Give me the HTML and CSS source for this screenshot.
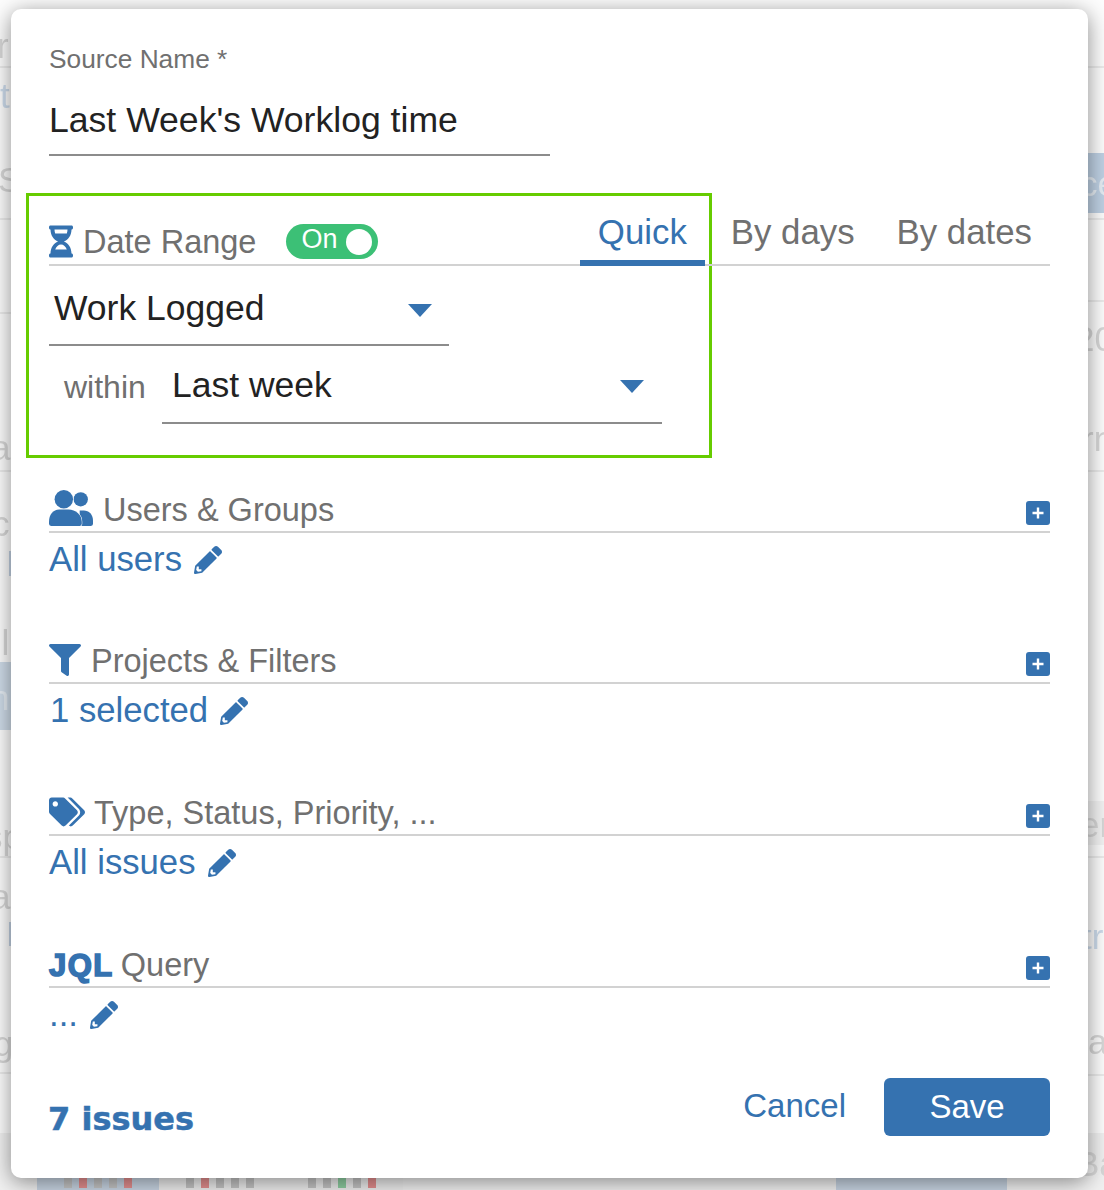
FILE: index.html
```html
<!DOCTYPE html>
<html lang="en">
<head>
  <meta charset="UTF-8">
  <title>Source settings</title>
  <link rel="stylesheet" href="styles.css">
</head>
<body>
  <!-- page behind the dialog, only the edges show -->
  <div class="backdrop">
    <span class="line l1"></span><span class="line l2"></span><span class="line l3"></span>
    <span class="line l4"></span><span class="line l5"></span><span class="line l6"></span>
    <span class="line r1"></span><span class="line r2"></span><span class="line r3"></span>
    <span class="line r4"></span><span class="line r5"></span><span class="line r6"></span>

    <span class="block block-left"></span>
    <span class="block block-right"></span>
    <span class="block band-right"></span>
    <span class="block band-bottom"></span>
    <span class="block bar-a"></span>
    <span class="block bar-b"></span>

    <span class="frag f1">ri</span>
    <span class="frag f2 bluish">t</span>
    <span class="frag f3">S</span>
    <span class="frag f4">a</span>
    <span class="frag f5">c</span>
    <span class="frag f6">ul</span>
    <span class="frag f7 whiteish">n</span>
    <span class="frag f8">sp</span>
    <span class="frag f9">a</span>
    <span class="frag f10">rg</span>
    <span class="frag f11 whiteish">ce</span>
    <span class="frag f12">20</span>
    <span class="frag f13">rn</span>
    <span class="frag f14">er</span>
    <span class="frag f15 bluish">tr</span>
    <span class="frag f16">a</span>
    <span class="frag f17">Ba</span>

    <div class="chart-strip">
      <div class="chart-tile active">
        <i class="bar gray"></i><i class="bar red"></i><i class="bar gray"></i><i class="bar gray"></i><i class="bar red"></i>
      </div>
      <div class="chart-tile">
        <i class="bar gray"></i><i class="bar red"></i><i class="bar gray"></i><i class="bar gray"></i><i class="bar gray"></i>
      </div>
      <div class="chart-tile">
        <i class="bar gray"></i><i class="bar gray"></i><i class="bar green"></i><i class="bar gray"></i><i class="bar red"></i>
      </div>
    </div>
    <span class="block pill-bottom"></span>
  </div>

  <div class="dialog">
    <div class="highlight"></div>

    <label class="field-label">Source Name *</label>
    <div class="name-input">Last Week's Worklog time</div>

    <div class="date-head">
      <svg class="icon icon-hourglass" viewBox="0 0 384 512"><path d="M360 0H24C10.745 0 0 10.745 0 24v16c0 13.255 10.745 24 24 24 0 90.965 51.016 167.734 120.842 192C75.016 280.266 24 357.035 24 448c-13.255 0-24 10.745-24 24v16c0 13.255 10.745 24 24 24h336c13.255 0 24-10.745 24-24v-16c0-13.255-10.745-24-24-24 0-90.965-51.016-167.734-120.842-192C308.984 231.734 360 154.965 360 64c13.255 0 24-10.745 24-24V24c0-13.255-10.745-24-24-24zm-75.078 384H99.08c17.059-46.797 52.096-80 92.92-80 40.821 0 75.862 33.196 92.922 80zm.019-256H99.078C91.988 108.548 88 86.748 88 64h208c0 22.805-3.987 44.587-11.059 64z"/></svg>
      <span class="head-title">Date Range</span>
      <div class="toggle"><span>On</span><i class="knob"></i></div>
      <div class="tabs">
        <a class="tab active">Quick</a>
        <a class="tab tab-days">By days</a>
        <a class="tab">By dates</a>
      </div>
    </div>

    <div class="select select-type">
      <span>Work Logged</span>
      <i class="caret"></i>
    </div>

    <div class="within-row">
      <span class="within">within</span>
      <div class="select select-range">
        <span>Last week</span>
        <i class="caret"></i>
      </div>
    </div>

    <div class="section first">
      <div class="section-head">
        <svg class="icon icon-users" viewBox="0 0 43 35">
          <circle cx="31" cy="9" r="7"/>
          <path d="M30 20h4c5 0 9 4 9 10v3a2 2 0 0 1-2 2H30z"/>
          <circle class="cut" cx="14.5" cy="9" r="9"/>
          <path class="cut" d="M10 19h9c7 0 13 5 13 12v2a2 2 0 0 1-2 2H2a2 2 0 0 1-2-2v-2c0-7 4-12 10-12z"/>
        </svg>
        <span class="head-title">Users &amp; Groups</span>
        <svg class="plus" viewBox="0 0 24 24"><rect width="24" height="24" rx="3"/><path d="M12 6.5v11M6.5 12h11"/></svg>
      </div>
      <a class="edit-link">All users
        <svg class="pencil" viewBox="0 0 512 512"><path d="M497.9 142.1l-46.1 46.1c-4.7 4.7-12.3 4.7-17 0l-111-111c-4.7-4.7-4.7-12.3 0-17l46.1-46.1c18.7-18.7 49.1-18.7 67.9 0l60.1 60.1c18.8 18.7 18.8 49.1 0 67.9zM284.2 99.8L21.6 362.4.4 483.9c-2.9 16.4 11.4 30.6 27.8 27.8l121.5-21.3 262.6-262.6c4.7-4.7 4.7-12.3 0-17l-111-111c-4.8-4.7-12.4-4.7-17.1 0zM88 424h48v36.3l-64.5 11.3-31.1-31.1L51.7 376H88v48z"/></svg>
      </a>
    </div>

    <div class="section">
      <div class="section-head">
        <svg class="icon icon-filter" viewBox="0 0 512 512"><path d="M487.976 0H24.028C2.71 0-8.047 25.866 7.058 40.971L192 225.941V432c0 7.831 3.821 15.17 10.237 19.662l80 55.98C298.02 518.69 320 507.493 320 487.98V225.941l184.947-184.97C520.021 25.896 509.338 0 487.976 0z"/></svg>
        <span class="head-title">Projects &amp; Filters</span>
        <svg class="plus" viewBox="0 0 24 24"><rect width="24" height="24" rx="3"/><path d="M12 6.5v11M6.5 12h11"/></svg>
      </div>
      <a class="edit-link one">1 selected
        <svg class="pencil" viewBox="0 0 512 512"><path d="M497.9 142.1l-46.1 46.1c-4.7 4.7-12.3 4.7-17 0l-111-111c-4.7-4.7-4.7-12.3 0-17l46.1-46.1c18.7-18.7 49.1-18.7 67.9 0l60.1 60.1c18.8 18.7 18.8 49.1 0 67.9zM284.2 99.8L21.6 362.4.4 483.9c-2.9 16.4 11.4 30.6 27.8 27.8l121.5-21.3 262.6-262.6c4.7-4.7 4.7-12.3 0-17l-111-111c-4.8-4.7-12.4-4.7-17.1 0zM88 424h48v36.3l-64.5 11.3-31.1-31.1L51.7 376H88v48z"/></svg>
      </a>
    </div>

    <div class="section">
      <div class="section-head">
        <svg class="icon icon-tags" viewBox="0 0 640 512"><path d="M497.941 225.941L286.059 14.059A48 48 0 0 0 252.118 0H48C21.49 0 0 21.49 0 48v204.118a48 48 0 0 0 14.059 33.941l211.882 211.882c18.744 18.745 49.136 18.746 67.882 0l204.118-204.118c18.745-18.745 18.745-49.137 0-67.882zM112 160c-26.51 0-48-21.49-48-48s21.49-48 48-48 48 21.49 48 48-21.49 48-48 48zm513.941 133.823L421.823 497.941c-18.745 18.745-49.137 18.745-67.882 0l-.36-.36L527.64 323.522c16.999-16.999 26.36-39.6 26.36-63.64s-9.362-46.641-26.36-63.64L331.397 0h48.721a48 48 0 0 1 33.941 14.059l211.882 211.882c18.745 18.745 18.745 49.137 0 67.882z"/></svg>
        <span class="head-title">Type, Status, Priority, ...</span>
        <svg class="plus" viewBox="0 0 24 24"><rect width="24" height="24" rx="3"/><path d="M12 6.5v11M6.5 12h11"/></svg>
      </div>
      <a class="edit-link">All issues
        <svg class="pencil" viewBox="0 0 512 512"><path d="M497.9 142.1l-46.1 46.1c-4.7 4.7-12.3 4.7-17 0l-111-111c-4.7-4.7-4.7-12.3 0-17l46.1-46.1c18.7-18.7 49.1-18.7 67.9 0l60.1 60.1c18.8 18.7 18.8 49.1 0 67.9zM284.2 99.8L21.6 362.4.4 483.9c-2.9 16.4 11.4 30.6 27.8 27.8l121.5-21.3 262.6-262.6c4.7-4.7 4.7-12.3 0-17l-111-111c-4.8-4.7-12.4-4.7-17.1 0zM88 424h48v36.3l-64.5 11.3-31.1-31.1L51.7 376H88v48z"/></svg>
      </a>
    </div>

    <div class="section">
      <div class="section-head">
        <span class="heavy jql">JQL</span>
        <span class="head-title">Query</span>
        <svg class="plus" viewBox="0 0 24 24"><rect width="24" height="24" rx="3"/><path d="M12 6.5v11M6.5 12h11"/></svg>
      </div>
      <a class="edit-link">...
        <svg class="pencil" viewBox="0 0 512 512"><path d="M497.9 142.1l-46.1 46.1c-4.7 4.7-12.3 4.7-17 0l-111-111c-4.7-4.7-4.7-12.3 0-17l46.1-46.1c18.7-18.7 49.1-18.7 67.9 0l60.1 60.1c18.8 18.7 18.8 49.1 0 67.9zM284.2 99.8L21.6 362.4.4 483.9c-2.9 16.4 11.4 30.6 27.8 27.8l121.5-21.3 262.6-262.6c4.7-4.7 4.7-12.3 0-17l-111-111c-4.8-4.7-12.4-4.7-17.1 0zM88 424h48v36.3l-64.5 11.3-31.1-31.1L51.7 376H88v48z"/></svg>
      </a>
    </div>

    <div class="footer">
      <span class="heavy issue-count">7 issues</span>
      <a class="cancel">Cancel</a>
      <button class="save">Save</button>
    </div>
  </div>
</body>
</html>
```

FILE: styles.css
```css
html, body {
  margin: 0;
  height: 1190px;
  overflow: hidden;
  background: #fdfdfd;
  font-family: "Liberation Sans", Arial, sans-serif;
}

/* page behind */
.backdrop {
  position: absolute;
  inset: 0;
  overflow: hidden;
  filter: blur(0.6px);
}

.line {
  position: absolute;
  height: 2px;
  background: #ececec;
}

.l1 { left: 0; width: 12px; top: 66px; }
.l2 { left: 0; width: 12px; top: 218px; }
.l3 { left: 0; width: 12px; top: 312px; }
.l4 { left: 0; width: 12px; top: 470px; }
.l5 { left: 0; width: 12px; top: 856px; }
.l6 { left: 0; width: 12px; top: 1072px; }
.r1 { right: 0; width: 18px; top: 66px; }
.r2 { right: 0; width: 18px; top: 218px; }
.r3 { right: 0; width: 18px; top: 300px; }
.r4 { right: 0; width: 18px; top: 470px; }
.r5 { right: 0; width: 18px; top: 856px; }
.r6 { right: 0; width: 18px; top: 1074px; }

.block {
  position: absolute;
}

.block-left { left: 0; width: 12px; top: 662px; height: 68px; background: #cfdce9; }
.block-right { right: 0; width: 18px; top: 153px; height: 60px; background: #bfd1e4; }
.band-right { right: 0; width: 18px; top: 801px; height: 44px; background: #f3f3f3; }
.band-bottom { left: 0; right: 0; top: 1133px; height: 57px; background: #f1f1f1; }
.bar-a { left: 9px; width: 3px; top: 551px; height: 25px; background: #c3d3e4; }
.bar-b { left: 9px; width: 3px; top: 922px; height: 24px; background: #c3d3e4; }
.pill-bottom { left: 836px; width: 171px; top: 1150px; height: 40px; background: #c8d5e3; }

.frag {
  position: absolute;
  font-size: 35px;
  line-height: 40px;
  color: #d8d8d8;
}

.bluish { color: #cddcec; }
.whiteish { color: #e6edf4; }

.f1 { left: -3px; top: 26px; }
.f2 { left: 0; top: 76px; }
.f3 { left: -2px; top: 160px; }
.f4 { left: -9px; top: 428px; }
.f5 { left: -8px; top: 504px; }
.f6 { left: -18px; top: 623px; }
.f7 { left: -10px; top: 678px; }
.f8 { left: -15px; top: 817px; }
.f9 { left: -9px; top: 877px; }
.f10 { left: -18px; top: 1024px; }
.f11 { left: 1080px; top: 164px; }
.f12 { left: 1075px; top: 319px; }
.f13 { left: 1082px; top: 419px; }
.f14 { left: 1080px; top: 805px; }
.f15 { left: 1082px; top: 917px; }
.f16 { left: 1088px; top: 1022px; }
.f17 { left: 1076px; top: 1144px; }

.chart-strip {
  position: absolute;
  left: 37px;
  top: 1160px;
  display: flex;
}

.chart-tile {
  width: 122px;
  height: 30px;
  box-sizing: border-box;
  display: flex;
  align-items: flex-end;
  justify-content: center;
  gap: 7px;
  padding-bottom: 2px;
  background: #eeeeee;
}

.chart-tile.active {
  background: #c8d5e3;
}

.bar {
  width: 8px;
  height: 26px;
  display: block;
}

.gray { background: #c4c4c4; }
.red { background: #e58f8f; }
.green { background: #8fcfa2; }

/* dialog */
.dialog {
  position: absolute;
  left: 11px;
  top: 9px;
  width: 1077px;
  height: 1169px;
  box-sizing: border-box;
  padding: 32px 38px 0;
  background: #fff;
  border-radius: 10px;
  box-shadow: 0 4px 22px rgba(0, 0, 0, 0.45);
}

.highlight {
  position: absolute;
  left: 15px;
  top: 184px;
  width: 686px;
  height: 265px;
  box-sizing: border-box;
  border: 3px solid #66cc00;
}

.field-label {
  display: block;
  height: 36px;
  line-height: 36px;
  font-size: 26.3px;
  color: #707070;
}

.name-input {
  width: 501px;
  height: 79px;
  box-sizing: border-box;
  padding-top: 22px;
  line-height: 42px;
  font-size: 35.6px;
  color: #222;
  border-bottom: 2px solid #8c8c8c;
}

.date-head {
  margin-top: 37px;
  height: 73px;
  box-sizing: border-box;
  display: flex;
  align-items: flex-end;
  border-bottom: 2px solid #d2d2d2;
  position: relative;
}

.icon {
  fill: #3572b0;
  display: block;
  flex: none;
}

.icon-hourglass {
  width: 24px;
  height: 33px;
  margin: 0 10px 6px 0;
}

.head-title {
  font-size: 32.5px;
  line-height: 44px;
  color: #707070;
}

.toggle {
  width: 92px;
  height: 35px;
  margin: 0 0 5px 30px;
  box-sizing: border-box;
  padding: 0 6px 0 15px;
  border-radius: 18px;
  background: #3cc076;
  display: flex;
  align-items: center;
  justify-content: space-between;
  color: #fff;
  font-size: 27px;
}

.toggle span {
  margin-top: -4px;
}

.knob {
  width: 26px;
  height: 26px;
  border-radius: 50%;
  background: #fff;
}

.tabs {
  display: flex;
  gap: 8px;
  margin-left: auto;
  margin-bottom: -2px;
}

.tab {
  height: 71px;
  box-sizing: border-box;
  padding: 12px 18px 0;
  line-height: 50px;
  font-size: 34.8px;
  color: #707070;
}

.tab-days {
  margin-right: -2px;
}

.tab.active {
  color: #3572b0;
  border-bottom: 6px solid #3572b0;
}

.select {
  box-sizing: border-box;
  display: flex;
  align-items: center;
  justify-content: space-between;
  color: #222;
  font-size: 35.5px;
  border-bottom: 2px solid #8c8c8c;
}

.select-type {
  width: 400px;
  height: 80px;
  padding: 6px 17px 0 5px;
}

.caret {
  width: 0;
  height: 0;
  border-left: 12px solid transparent;
  border-right: 12px solid transparent;
  border-top: 13px solid #3572b0;
}

.select-type .caret {
  margin-top: 4px;
}

.within-row {
  display: flex;
  height: 78px;
}

.within {
  width: 113px;
  box-sizing: border-box;
  padding: 18px 0 0 15px;
  line-height: 46px;
  font-size: 32px;
  color: #707070;
}

.select-range {
  width: 500px;
  padding: 0 18px 0 10px;
}

.select-range span {
  margin-top: 2px;
}

.select-range .caret {
  margin-top: 5px;
}

.section {
  margin-top: 56px;
}

.section.first {
  margin-top: 65px;
  margin-bottom: -1px;
}

.section-head {
  height: 44px;
  box-sizing: border-box;
  display: flex;
  align-items: flex-end;
  border-bottom: 2px solid #d2d2d2;
}

.section-head .head-title {
  line-height: 42px;
}

.plus {
  width: 24px;
  height: 24px;
  margin: 0 0 6px auto;
  fill: #3572b0;
  stroke: none;
}

.plus path {
  fill: none;
  stroke: #fff;
  stroke-width: 2.4;
}

.icon-users {
  width: 44px;
  height: 36px;
  margin: 0 10px 5px 0;
}

.icon-users .cut {
  stroke: #fff;
  stroke-width: 1;
  paint-order: stroke;
}

.icon-filter {
  width: 32px;
  height: 32px;
  margin: 0 10px 6px 0;
}

.icon-tags {
  width: 36px;
  height: 32px;
  margin: 0 9px 6px 0;
}

.heavy {
  font-weight: bold;
  color: #3572b0;
}

.jql {
  font-size: 31px;
  line-height: 40px;
  letter-spacing: 1.5px;
  margin-right: 7px;
  -webkit-text-stroke: 1.6px #3572b0;
}

.edit-link {
  display: flex;
  align-items: center;
  gap: 12px;
  height: 52px;
  color: #3572b0;
  font-size: 34.7px;
}

.edit-link.one {
  padding-left: 1px;
}

.pencil {
  width: 28px;
  height: 28px;
  margin-top: 2px;
  fill: #3572b0;
}

.footer {
  margin-top: 38px;
  display: flex;
  align-items: flex-start;
}

.issue-count {
  margin: 19px auto 0 -1px;
  font-family: "DejaVu Sans", sans-serif;
  font-size: 32px;
  line-height: 44px;
  -webkit-text-stroke: 0.5px #3572b0;
}

.cancel {
  margin-right: 38px;
  height: 58px;
  line-height: 56px;
  font-size: 33px;
  color: #3572b0;
}

.save {
  width: 166px;
  height: 58px;
  border: 0;
  border-radius: 6px;
  background: #3572b0;
  color: #fff;
  font-family: inherit;
  font-size: 33px;
}
```
